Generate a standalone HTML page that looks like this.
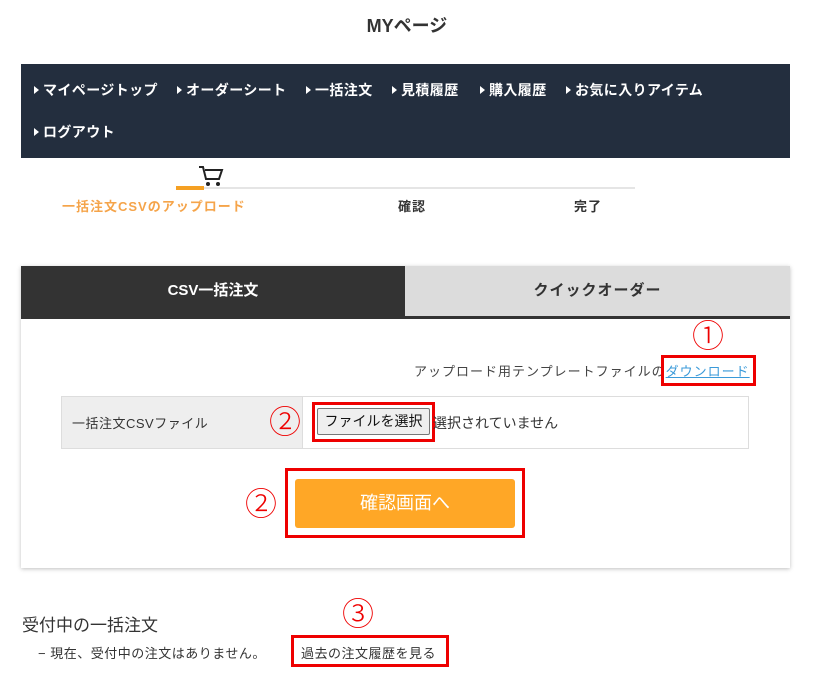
<!DOCTYPE html>
<html><head><meta charset="utf-8">
<style>
*{margin:0;padding:0;box-sizing:border-box}
body{width:814px;height:677px;background:#fff;font-family:"Liberation Sans","Noto Sans CJK JP",sans-serif;color:#333;position:relative;overflow:hidden}
.a{position:absolute}
.nav{left:21px;top:64px;width:769px;height:94px;background:#232e3e;color:#fff;font-size:14px;font-weight:bold;letter-spacing:0.4px}
.nav span{position:absolute;white-space:nowrap}
.nav span:before{content:"";display:inline-block;border-left:5px solid #fff;border-top:4px solid transparent;border-bottom:4px solid transparent;margin-right:4px;vertical-align:1px}
.red{border:3px solid #e00;position:absolute}
.num{position:absolute;color:#e00;font-size:32px;font-family:"Noto Sans CJK JP",sans-serif;font-weight:300;line-height:1}
</style></head><body>
<div class="a" style="left:0;width:814px;top:12px;text-align:center;font-size:18px;font-weight:bold">MYページ</div>
<div class="a nav">
<span style="left:13px;top:16px">マイページトップ</span>
<span style="left:156px;top:16px">オーダーシート</span>
<span style="left:285px;top:16px">一括注文</span>
<span style="left:371px;top:16px">見積履歴</span>
<span style="left:459px;top:16px">購入履歴</span>
<span style="left:545px;top:16px">お気に入りアイテム</span>
<span style="left:13px;top:58px">ログアウト</span>
</div>
<svg class="a" style="left:198px;top:165px" width="26" height="22" viewBox="0 0 26 22"><path d="M1 2h4l3 12h13l3-9H7" fill="none" stroke="#222" stroke-width="2"/><circle cx="10" cy="19" r="2" fill="#222"/><circle cx="20" cy="19" r="2" fill="#222"/></svg>
<div class="a" style="left:176px;top:187px;width:459px;height:2px;background:#e5e5e5"></div>
<div class="a" style="left:176px;top:186px;width:28px;height:4px;background:#f5a023"></div>
<div class="a" style="left:62px;top:196px;font-size:13px;font-weight:bold;color:#f5a44a;letter-spacing:1px">一括注文CSVのアップロード</div>
<div class="a" style="left:398px;top:196px;font-size:13px;font-weight:bold;letter-spacing:1px">確認</div>
<div class="a" style="left:574px;top:196px;font-size:13px;font-weight:bold;letter-spacing:1px">完了</div>

<div class="a" style="left:21px;top:266px;width:769px;height:302px;background:#fff;box-shadow:0 1px 4px rgba(0,0,0,.25)"></div>
<div class="a" style="left:21px;top:266px;width:384px;height:50px;background:#333;color:#fff;font-weight:bold;font-size:15px;text-align:center;line-height:50px">CSV一括注文</div>
<div class="a" style="left:405px;top:266px;width:385px;height:50px;background:#dcdcdc;color:#333;font-weight:bold;font-size:15px;text-align:center;line-height:50px;letter-spacing:1px">クイックオーダー</div>
<div class="a" style="left:21px;top:316px;width:769px;height:3px;background:#333"></div>

<div class="a" style="left:414px;top:361px;font-size:13px;color:#444;letter-spacing:1px;white-space:nowrap">アップロード用テンプレートファイルの<span style="color:#3a9ad9;text-decoration:underline">ダウンロード</span></div>
<div class="red" style="left:661px;top:355px;width:95px;height:31px"></div>
<div class="num" style="left:692px;top:318px">①</div>

<div class="a" style="left:61px;top:396px;width:688px;height:53px;border:1px solid #ddd"></div>
<div class="a" style="left:62px;top:397px;width:241px;height:51px;background:#eee;border-right:1px solid #ddd"></div>
<div class="a" style="left:72px;top:413px;font-size:13px;color:#333;letter-spacing:0.5px">一括注文CSVファイル</div>
<div class="num" style="left:269px;top:404px">②</div>
<div class="a" style="left:317px;top:408px;width:113px;height:27px;border:1px solid #777;border-radius:2px;background:#efefef;font-size:14px;line-height:25px;text-align:center;color:#111">ファイルを選択</div>
<div class="red" style="left:312px;top:402px;width:123px;height:40px"></div>
<div class="a" style="left:433px;top:413px;font-size:14px;color:#333">選択されていません</div>

<div class="num" style="left:245px;top:486px">②</div>
<div class="red" style="left:285px;top:468px;width:240px;height:70px"></div>
<div class="a" style="left:295px;top:479px;width:220px;height:49px;background:#ffa726;border-radius:3px;color:#fff;font-size:18px;text-align:center;line-height:49px">確認画面へ</div>

<div class="a" style="left:22px;top:611px;font-size:17px;color:#333">受付中の一括注文</div>
<div class="a" style="left:38px;top:643px;font-size:13px;color:#333;letter-spacing:0.5px">− 現在、受付中の注文はありません。</div>
<div class="num" style="left:342px;top:596px">③</div>
<div class="red" style="left:291px;top:635px;width:158px;height:32px"></div>
<div class="a" style="left:301px;top:643px;font-size:13px;color:#333;letter-spacing:0.5px">過去の注文履歴を見る</div>
</body></html>
